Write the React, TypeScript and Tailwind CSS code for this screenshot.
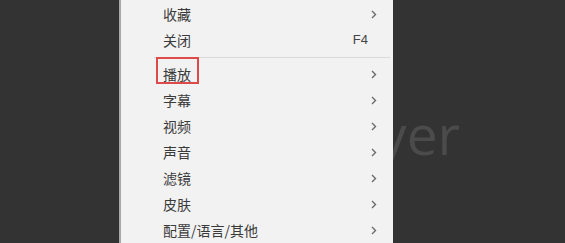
const ITEMS_TOP: { label: string; shortcut?: string }[] = [
  { label: "收藏" },
  { label: "关闭", shortcut: "F4" },
];

const ITEMS_BOTTOM: { label: string; marked?: boolean }[] = [
  { label: "播放", marked: true },
  { label: "字幕" },
  { label: "视频" },
  { label: "声音" },
  { label: "滤镜" },
  { label: "皮肤" },
  { label: "配置/语言/其他" },
];

function Chevron() {
  return (
    <svg width="6" height="9" viewBox="0 0 6 9" className="text-[#6b6b6b]">
      <path d="M1 1l3.5 3.5L1 8" fill="none" stroke="currentColor" strokeWidth="1.4" />
    </svg>
  );
}

function Row({ label, shortcut, marked }: { label: string; shortcut?: string; marked?: boolean }) {
  return (
    <div className="flex h-[26px] items-center justify-between pl-[42px] pr-[16px]">
      <span className="relative leading-none">
        {label}
        {/* 红框标注 */}
        {marked && (
          <span className="absolute left-[-7px] top-[-10px] h-[27px] w-[43px] border-2 border-[#dc4a4a]" />
        )}
      </span>
      {shortcut ? (
        <span className="pr-[9px] text-[13px] font-['Liberation_Sans',sans-serif] text-[#444]">
          {shortcut}
        </span>
      ) : (
        <Chevron />
      )}
    </div>
  );
}

export default function App() {
  return (
    <div className="relative flex h-[243px] w-[565px] overflow-hidden bg-[#333333]">
      {/* 背景水印 */}
      <span className="absolute right-[105px] top-[106px] font-['Open_Sans',sans-serif] text-[55px] leading-none text-[#4b4b4b]">
        PotPlayer
      </span>

      <div className="relative z-10 ml-[119px] h-full w-[274px] border-l-2 border-[#a8a8a8] bg-[#f2f2f2] pt-[1px] font-['Noto_Sans_CJK_SC',sans-serif] text-[14px] text-[#3a3a3a]">
        {ITEMS_TOP.map((it) => (
          <Row key={it.label} label={it.label} shortcut={it.shortcut} />
        ))}
        <div className="flex h-[8px] items-center pl-[33px] pr-[3px]">
          <div className="h-px w-full bg-[#d9d9d9]" />
        </div>
        {ITEMS_BOTTOM.map((it) => (
          <Row key={it.label} label={it.label} marked={it.marked} />
        ))}
      </div>
    </div>
  );
}
